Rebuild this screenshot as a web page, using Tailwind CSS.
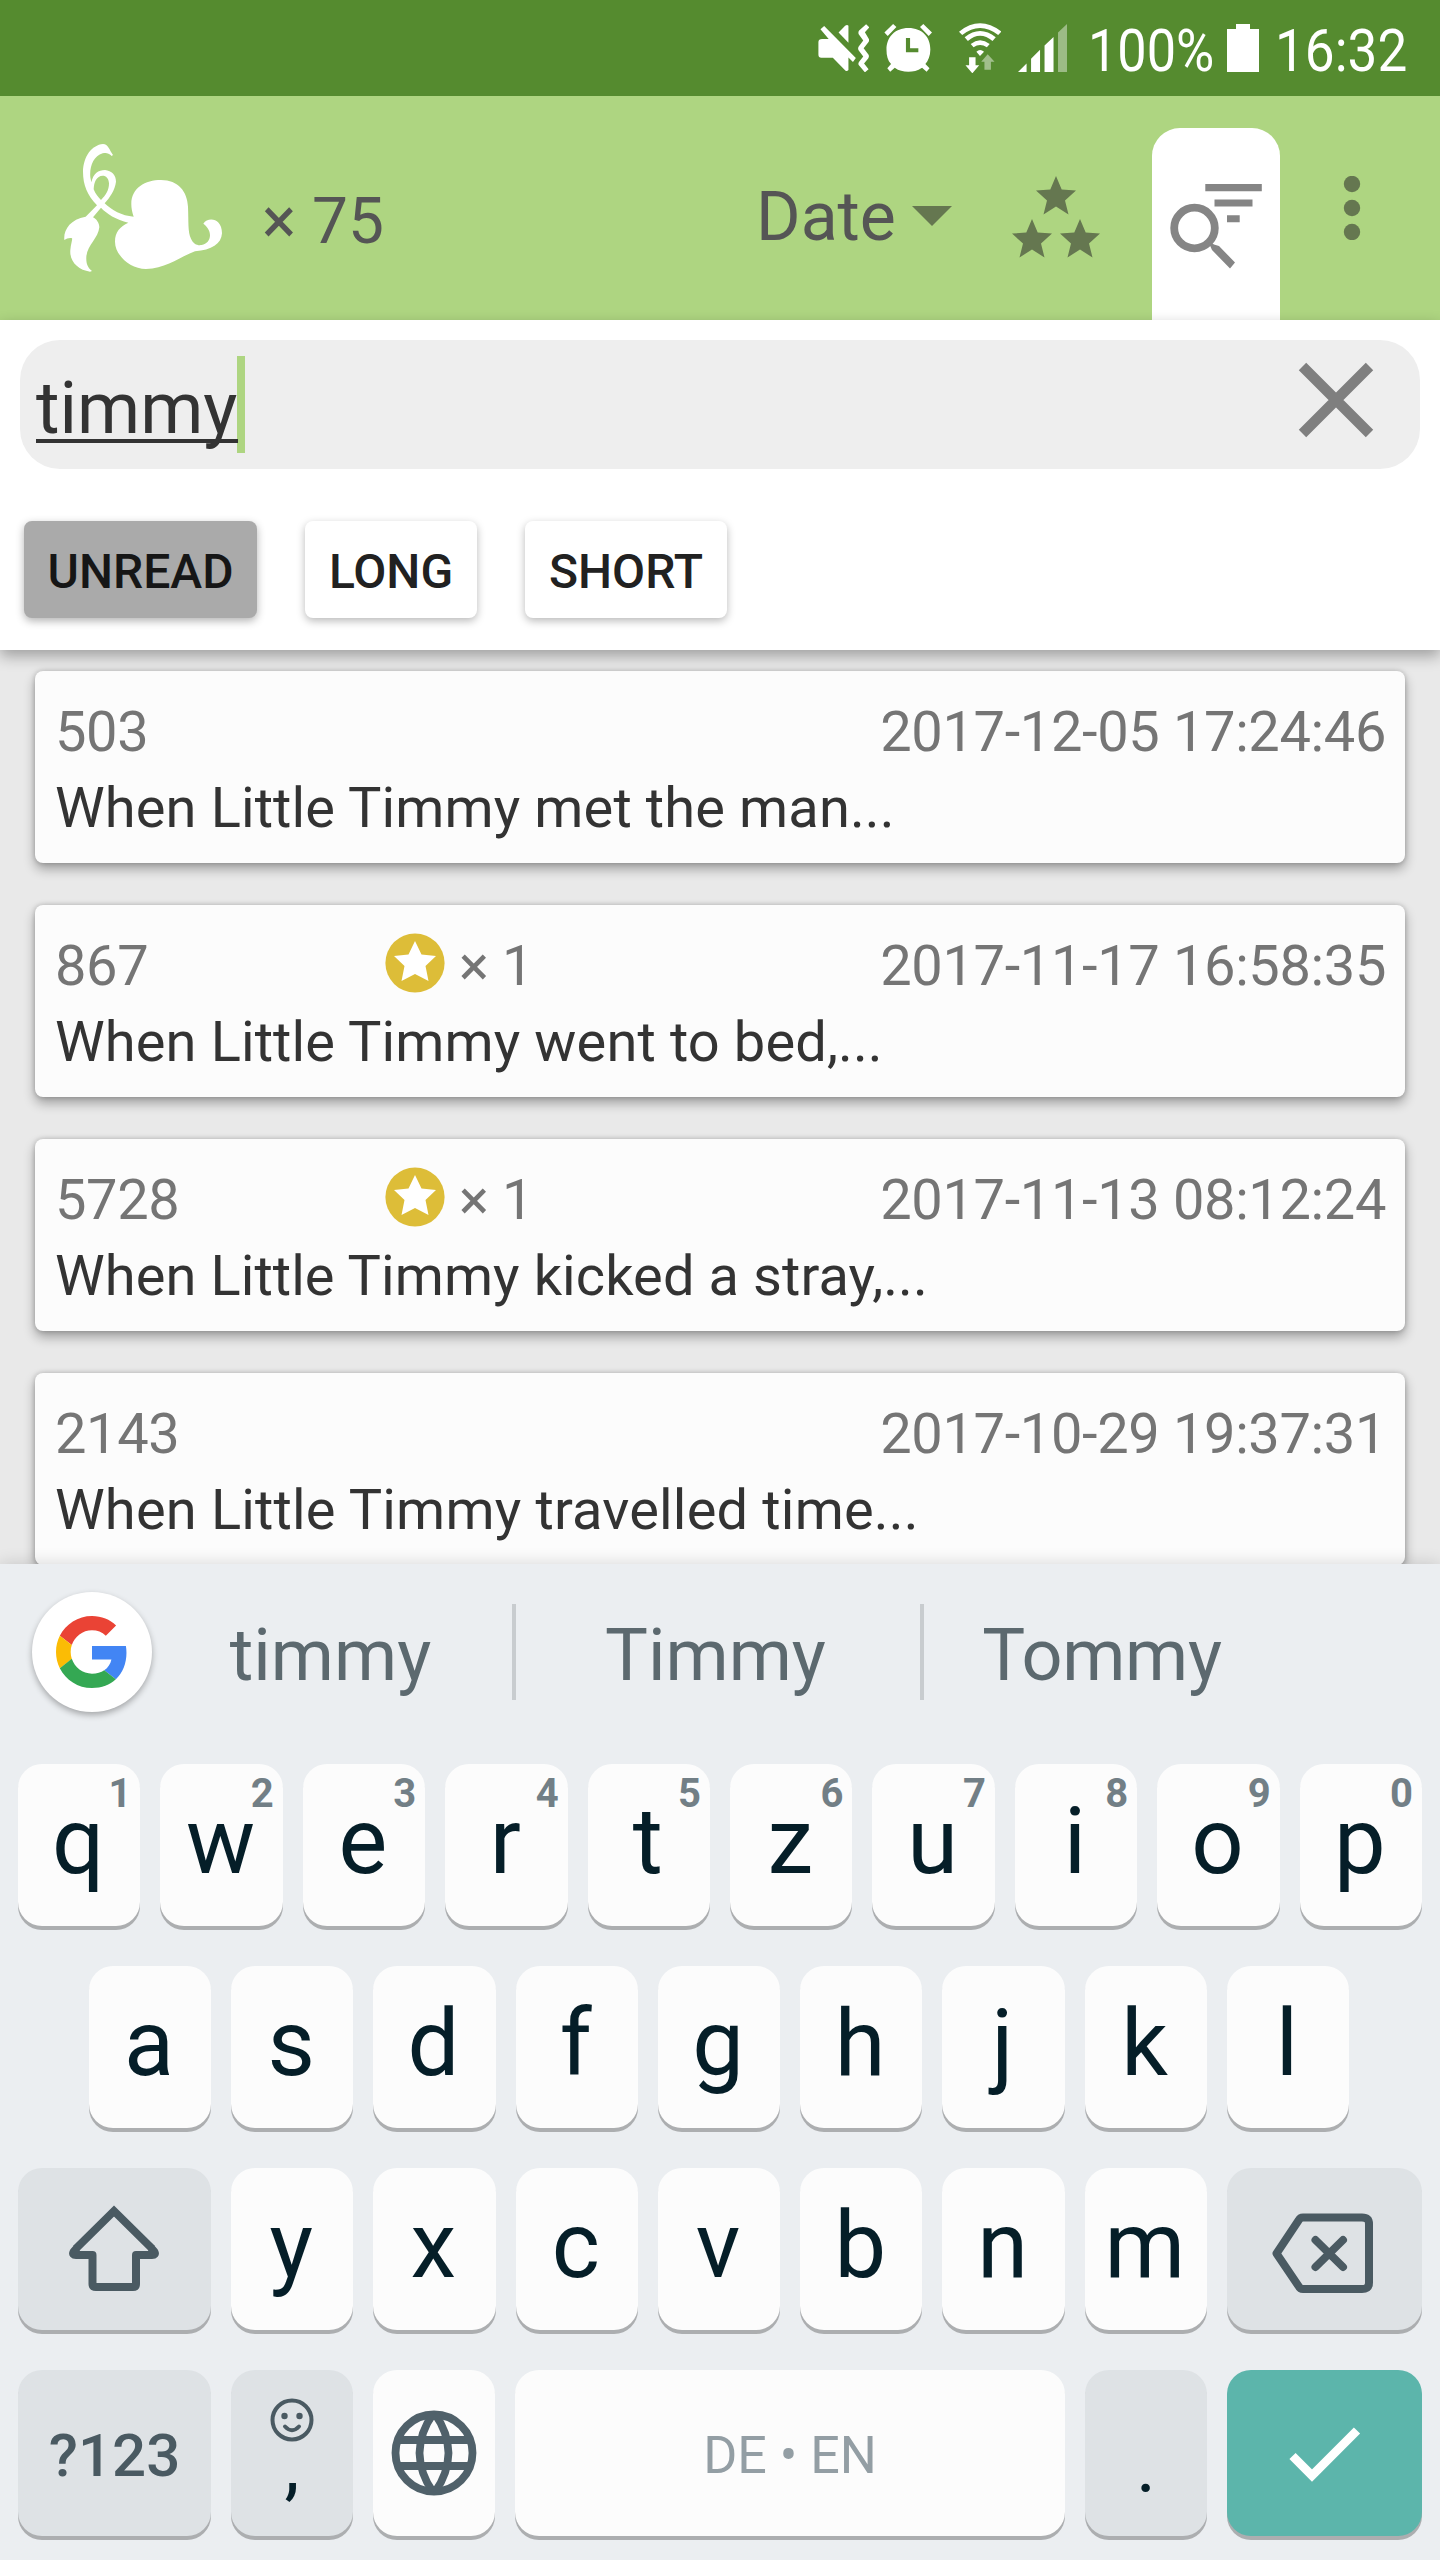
<!DOCTYPE html>
<html lang="en">
<head>
<meta charset="utf-8">
<title>Story search</title>
<script src="https://cdn.jsdelivr.net/npm/@tailwindcss/browser@4"></script>
</head>
<body class="w-[1440px] h-[2560px] overflow-hidden bg-[#e9e9e9] font-['Roboto',sans-serif] flex flex-col">

<!-- Status bar -->
<div class="h-24 shrink-0 bg-[#558b2f] flex items-start pl-[818px] text-white">
  <svg class="mt-6 w-[51px] h-12 shrink-0" viewBox="44 72 124 145" preserveAspectRatio="none" fill="currentColor">
    <path d="M59 78L136 175L129 187L118 173V211Q115 215 111 213L80 174H52Q45 174 45 164V126Q45 117 54 117H70L50 88Z"/>
    <path d="M118 77V129L94 98L110 77Q115 73 118 77Z"/>
    <path d="M161 73L169 82L158 97L168 118Q169 124 166 128L155 145L167 165Q169 171 166 176L156 191L167 209L158 218L143 196Q141 191 144 186L154 170L143 152Q140 146 143 140L154 122L143 103Q141 97 144 92Z"/>
  </svg>
  <svg class="mt-6 ml-[15px] w-12 h-12 shrink-0" viewBox="207 72 116 145" preserveAspectRatio="none" fill="currentColor">
    <path d="M229 72L237 81L216 108L208 98ZM302 72L294 81L315 108L323 98Z"/>
    <path fill-rule="evenodd" d="M266 84C300 84 319 112 319 149C319 168 314 182 307 193L317 206L310 216L299 204C288 214 277 216 266 216C253 216 243 213 233 204L222 216L215 206L224 193C216 182 213 168 213 149C213 112 233 84 266 84ZM260 114V157H290V145H270V114Z"/>
  </svg>
  <svg class="mt-[23px] ml-[27px] w-[42px] h-[50px] shrink-0" viewBox="390 68 104 150" preserveAspectRatio="none" fill="currentColor">
    <path d="M390 94Q442 44 495 94L487 104Q442 62 398 104ZM404 111Q442 73 481 111L473 122Q442 90 412 122ZM419 131Q442 109 466 131L459 141Q442 127 426 141ZM433 154Q442 144 452 154L442 167Z"/>
    <path d="M415 171H431V195H440L423 219L406 195H415Z"/>
    <path opacity=".45" d="M461 162L478 184H469V208H453V184H445Z"/>
  </svg>
  <svg class="mt-6 ml-[17px] w-[49px] h-12 shrink-0" viewBox="534 71 120 145" preserveAspectRatio="none" fill="currentColor">
    <path d="M534 216L555 190V216ZM566 216V176L588 149V216ZM599 216V136L621 110V216Z"/>
    <path opacity=".42" d="M632 216V97L654 71V216Z"/>
  </svg>
  <div class="w-[136px] ml-[21px] h-[101px] leading-[101px] text-[60px] whitespace-nowrap origin-left scale-x-[0.87] shrink-0">100%</div>
  <svg class="mt-[24px] ml-[3px] w-8 h-12 shrink-0" viewBox="0 0 32 48" fill="currentColor"><path d="M9 0H23V5H32V48H0V5H9Z"/></svg>
  <div class="ml-[16px] h-[101px] leading-[101px] text-[60px] whitespace-nowrap origin-left scale-x-[0.885] shrink-0">16:32</div>
</div>

<!-- Toolbar -->
<div class="h-56 shrink-0 bg-[#aed581] flex items-start pl-[63px] text-[#555]">
  <svg class="mt-[47px] w-40 h-[130px] shrink-0" viewBox="189 159 480 390" fill="#fff">
    <path fill-rule="evenodd" d="M401 380C375 305 425 270 483 270C535 270 562 305 564 350C566 395 563 425 573 446C580 462 592 467 605 465C632 460 642 425 610 401C624 380 666 384 666 430C664 462 635 480 585 484C540 500 500 535 438 537C390 537 345 495 345 455C345 425 360 410 385 398C350 390 318 370 303 353L279 382C290 387 298 400 298 412C295 445 262 465 259 500C258 520 262 532 276 543L270 545C235 540 208 515 211 480C213 460 218 448 216 445C208 443 200 446 193 450C190 420 210 388 257 380L291 346C262 315 249 285 249 245C250 200 275 165 309 162C325 162 328 180 339 195L335 198C325 188 318 188 308 190C280 198 268 230 271 262L274 277C280 250 295 240 315 240C335 242 348 255 348 275C345 300 330 322 314 340C335 360 365 378 401 380ZM303 330C318 315 327 300 327 280C326 265 318 257 308 257C290 258 282 275 281 298C286 312 295 322 303 330Z"/>
  </svg>
  <div class="mt-[86px] ml-[39px] w-[124px] text-[64px] leading-[80px] whitespace-nowrap shrink-0">× 75</div>
  <div class="mt-[81px] ml-[370px] w-[140px] text-[68px] leading-[80px] shrink-0">Date</div>
  <svg class="mt-[110px] ml-[16px] w-10 h-5 shrink-0" viewBox="0 0 40 20" fill="#657750"><path d="M0 0H40L20 20Z"/></svg>
  <svg class="mt-[80px] ml-[60px] w-[88px] h-[82px] shrink-0" viewBox="0 0 88 82" fill="#657750">
    <defs><path id="star" d="M20 0L25.700 13.600L40 14.600L29 24.400L32.500 38.500L20 30.500L7.500 38.500L11 24.400L0 14.600L14.300 13.600Z"/></defs>
    <use href="#star" x="24" y="0"/><use href="#star" x="0" y="43"/><use href="#star" x="48" y="43"/>
  </svg>
  <div class="mt-8 ml-[52px] w-32 h-48 rounded-t-[28px] bg-white shrink-0">
    <svg class="w-32 h-48" viewBox="1152 128 128 192" fill="#858585">
      <path d="M1205.3 184h56.5v7.2h-56.5zM1214.5 199.5h38v7h-38zM1227 215.2h12.7v7H1227z"/>
      <circle cx="1194.5" cy="228" r="20.3" fill="none" stroke="#858585" stroke-width="7.8"/>
      <path d="M1208 241L1214 244.500L1219 246L1235 262.500L1230 268.500L1212 250Z"/>
    </svg>
  </div>
  <svg class="mt-[80px] ml-[63px] w-[18px] h-16 shrink-0" viewBox="0 0 18 64" fill="#657750"><circle cx="9" cy="8" r="8.200"/><circle cx="9" cy="32" r="8.200"/><circle cx="9" cy="56" r="8.200"/></svg>
</div>

<!-- Search panel -->
<div class="relative z-10 h-[330px] shrink-0 bg-white pt-5 px-5 shadow-[0_6px_14px_rgba(0,0,0,0.32)]">
  <div class="h-[129px] rounded-[40px] bg-[#eee] flex items-start pl-4 text-[#333]">
    <div class="relative mt-[18px] w-[202px] h-[101px] text-[72px] leading-[101px]">timmy<span class="absolute left-0 top-[81px] w-[202px] h-1 bg-[#333]"></span></div>
    <div class="-ml-px mt-4 w-2 h-[97px] bg-[#aed581]"></div>
    <svg class="ml-auto mr-[46px] mt-[22px] w-[76px] h-[76px]" viewBox="0 0 76 76" stroke="#7f7f7f" stroke-width="10.500"><path d="M4.500 4.500L71.500 71.500M71.500 4.500L4.500 71.500"/></svg>
  </div>
  <div class="flex gap-12 mt-[52px] pl-1 text-[48px] font-medium leading-[102px] text-[#212121] text-center">
    <div class="w-[233px] h-[97px] rounded-lg bg-[#aaa] text-[#161616] shadow-[0_3px_8px_rgba(0,0,0,0.3)]">UNREAD</div>
    <div class="w-[172px] h-[97px] rounded-lg bg-white shadow-[0_3px_8px_rgba(0,0,0,0.28)]">LONG</div>
    <div class="w-[202px] h-[97px] rounded-lg bg-white shadow-[0_3px_8px_rgba(0,0,0,0.28)]">SHORT</div>
  </div>
</div>

<!-- Results -->
<div class="h-[914px] shrink-0 overflow-hidden pt-[21px] px-[35px] flex flex-col gap-[42px] text-[56px] leading-[76px] text-[#333]">
  <div class="h-48 shrink-0 rounded-lg bg-[#fcfcfc] pt-[23px] pl-5 pr-[19px] shadow-[0_6px_12px_rgba(0,0,0,0.32),0_0_5px_rgba(0,0,0,0.2)]">
    <div class="flex text-[#757575] tracking-[-0.36px]"><span class="w-[330px]">503</span><span class="ml-auto">2017-12-05 17:24:46</span></div>
    <div class="tracking-[0.12px]">When Little Timmy met the man...</div>
  </div>
  <div class="h-48 shrink-0 rounded-lg bg-[#fcfcfc] pt-[23px] pl-5 pr-[19px] shadow-[0_6px_12px_rgba(0,0,0,0.32),0_0_5px_rgba(0,0,0,0.2)]">
    <div class="flex text-[#757575] tracking-[-0.36px]"><span class="w-[330px]">867</span>
      <svg class="mt-[5px] w-[60px] h-[60px]" viewBox="0 0 60 60"><circle cx="30" cy="30" r="29.600" fill="#ddbd38"/><path fill="#fff" d="M30 8L36.500 21.500L51 23L40.500 33L43.500 48L30 41L16.500 48L19.500 33L9 23L23.500 21.500Z"/></svg>
      <span class="ml-[14px]">× 1</span><span class="ml-auto">2017-11-17 16:58:35</span></div>
    <div class="tracking-[0.12px]">When Little Timmy went to bed,...</div>
  </div>
  <div class="h-48 shrink-0 rounded-lg bg-[#fcfcfc] pt-[23px] pl-5 pr-[19px] shadow-[0_6px_12px_rgba(0,0,0,0.32),0_0_5px_rgba(0,0,0,0.2)]">
    <div class="flex text-[#757575] tracking-[-0.36px]"><span class="w-[330px]">5728</span>
      <svg class="mt-[5px] w-[60px] h-[60px]" viewBox="0 0 60 60"><circle cx="30" cy="30" r="29.600" fill="#ddbd38"/><path fill="#fff" d="M30 8L36.500 21.500L51 23L40.500 33L43.500 48L30 41L16.500 48L19.500 33L9 23L23.500 21.500Z"/></svg>
      <span class="ml-[14px]">× 1</span><span class="ml-auto">2017-11-13 08:12:24</span></div>
    <div class="tracking-[0.08px]">When Little Timmy kicked a stray,...</div>
  </div>
  <div class="h-48 shrink-0 rounded-lg bg-[#fcfcfc] pt-[23px] pl-5 pr-[19px] shadow-[0_6px_12px_rgba(0,0,0,0.32),0_0_5px_rgba(0,0,0,0.2)]">
    <div class="flex text-[#757575] tracking-[-0.36px]"><span class="w-[330px]">2143</span><span class="ml-auto">2017-10-29 19:37:31</span></div>
    <div class="tracking-[0.18px]">When Little Timmy travelled time...</div>
  </div>
</div>

<!-- Keyboard -->
<div class="relative z-10 h-[996px] shrink-0 bg-[#ebeef1] shadow-[0_0_16px_rgba(0,0,0,0.16)]">
  <div class="h-[200px] flex items-start pt-7 pl-8 text-[72px] leading-[127px] text-[#5c696f] text-center">
    <div class="w-[120px] h-[120px] rounded-full bg-white shadow-[0_3px_6px_rgba(0,0,0,0.3)] flex items-center justify-center">
      <svg class="w-[72px] h-[72px]" viewBox="0 0 48 48">
        <path fill="#ea4335" d="M24 9.500c3.540 0 6.710 1.220 9.210 3.600l6.850-6.850C35.900 2.380 30.470 0 24 0 14.620 0 6.510 5.380 2.560 13.220l7.980 6.190C12.430 13.720 17.740 9.500 24 9.500z"/>
        <path fill="#4285f4" d="M46.980 24.550c0-1.570-.15-3.090-.38-4.550H24v9.020h12.940c-.58 2.960-2.260 5.480-4.780 7.180l7.730 6c4.510-4.180 7.090-10.360 7.090-17.650z"/>
        <path fill="#fbbc05" d="M10.530 28.590c-.48-1.450-.76-2.990-.76-4.590s.27-3.140.76-4.590l-7.980-6.190C.92 16.460 0 20.120 0 24c0 3.880.92 7.540 2.560 10.780l7.970-6.190z"/>
        <path fill="#34a853" d="M24 48c6.480 0 11.930-2.130 15.890-5.810l-7.730-6c-2.150 1.450-4.920 2.300-8.160 2.300-6.260 0-11.570-4.220-13.470-9.910l-7.980 6.190C6.510 42.620 14.620 48 24 48z"/>
      </svg>
    </div>
    <div class="w-[360px] pr-[3px]">timmy</div>
    <div class="w-1 h-24 mt-3 bg-[#c8cccf]"></div>
    <div class="w-[404px] pr-[5px]">Timmy</div>
    <div class="w-1 h-24 mt-3 bg-[#c8cccf]"></div>
    <div class="w-[358px] pr-0.5 tracking-[-0.3px]">Tommy</div>
  </div>

  <div class="flex flex-col gap-10 px-[18px] text-[92px] leading-[155px] text-[#051e28] text-center">
    <div class="flex gap-5 h-[162px]" data-keys="qwertzuiop" data-hints="1234567890"></div>
    <div class="flex gap-5 h-[162px] pl-[71px] pr-[73px]" data-keys="asdfghjkl"></div>
    <div class="flex gap-5 h-[162px]">
      <div class="w-[193px] shrink-0 rounded-3xl bg-[#dee2e5] shadow-[0_4px_0_#acaeb0]">
        <svg class="w-full h-[162px]" viewBox="18 2168 193 162" fill="none" stroke="#4a5a62" stroke-width="8" stroke-linejoin="round">
          <path stroke-linejoin="miter" d="M76 2248.500L114 2211L152 2248.500"/>
          <path d="M77 2248L73.500 2252Q72 2255 76 2255H92.500V2284Q92.500 2287 96 2287H133Q136 2287 136 2284V2255H152Q156 2255 154.500 2252L151 2248"/>
        </svg>
      </div>
      <div class="flex gap-5 flex-1" data-keys="yxcvbnm"></div>
      <div class="w-[195px] shrink-0 rounded-3xl bg-[#dee2e5] shadow-[0_4px_0_#acaeb0]">
        <svg class="w-full h-[162px]" viewBox="1227 2168 195 162" fill="none" stroke="#4a5a62" stroke-width="8" stroke-linejoin="round" stroke-linecap="round">
          <path d="M1303 2217.500H1362Q1369 2217.500 1369 2224V2282.500Q1369 2289 1362 2289H1303Q1300 2289 1298.500 2286L1276.500 2253.500L1298.500 2220.500Q1300 2217.500 1303 2217.500ZM1315.500 2240L1343 2267M1343 2240L1315.500 2267"/>
        </svg>
      </div>
    </div>
    <div class="flex gap-5 h-[166px]">
      <div class="w-[193px] rounded-3xl bg-[#dee2e5] shadow-[0_4px_0_#acaeb0] text-[60px] leading-[171px] font-medium text-[#4a5a62]">?123</div>
      <div class="relative w-[122px] rounded-3xl bg-[#dee2e5] shadow-[0_4px_0_#acaeb0] text-[76px] leading-[191px]">,
        <svg class="absolute left-[39px] top-7 w-11 h-11" viewBox="0 0 44 44" fill="none" stroke="#4a5a62" stroke-width="4"><circle cx="22" cy="22" r="19.500"/><path stroke-linecap="round" d="M15 28.500Q22 36 29 28.500"/><g fill="#4a5a62" stroke="none"><circle cx="14.500" cy="18" r="3.200"/><circle cx="29.500" cy="18" r="3.200"/></g></svg>
      </div>
      <div class="w-[122px] rounded-3xl bg-[#fcfcfc] shadow-[0_4px_0_#acaeb0]">
        <svg class="w-full h-[166px]" viewBox="373 2370 122 166" fill="none" stroke="#50616a" stroke-width="7.800"><circle cx="434" cy="2453" r="38.500"/><path d="M398 2440H470M398 2466H470M433 2414Q420 2432 419.500 2453Q420 2474 433 2492M435 2414Q448 2432 448.500 2453Q448 2474 435 2492"/></svg>
      </div>
      <div class="w-[550px] rounded-3xl bg-[#fcfcfc] shadow-[0_4px_0_#acaeb0] text-[52px] leading-[171px] text-[#939ea4]">DE • EN</div>
      <div class="w-[122px] rounded-3xl bg-[#dee2e5] shadow-[0_4px_0_#acaeb0] text-[76px] leading-[191px]">.</div>
      <div class="w-[195px] rounded-3xl bg-[#5cb5ab] shadow-[0_4px_0_#acaeb0]">
        <svg class="w-full h-[166px]" viewBox="1227 2370 195 166" fill="none" stroke="#fff" stroke-width="8.800"><path d="M1292.500 2456L1312 2475.500L1357 2430.500"/></svg>
      </div>
    </div>
  </div>
</div>

<script>
// Fill each letter row; the top row also carries its digit hints.
document.querySelectorAll('[data-keys]').forEach(function (row) {
  var hints = row.dataset.hints || '';
  row.innerHTML = row.dataset.keys.split('').map(function (k, i) {
    var hint = hints[i] ? '<span class="absolute right-[9px] top-2.5 text-[40px] leading-[40px] font-bold text-[#727f86]">' + hints[i] + '</span>' : '';
    return '<div class="relative flex-1 basis-0 pr-0.5 rounded-3xl bg-[#fcfcfc] shadow-[0_4px_0_#acaeb0]">' + k + hint + '</div>';
  }).join('');
});
</script>
</body>
</html>
